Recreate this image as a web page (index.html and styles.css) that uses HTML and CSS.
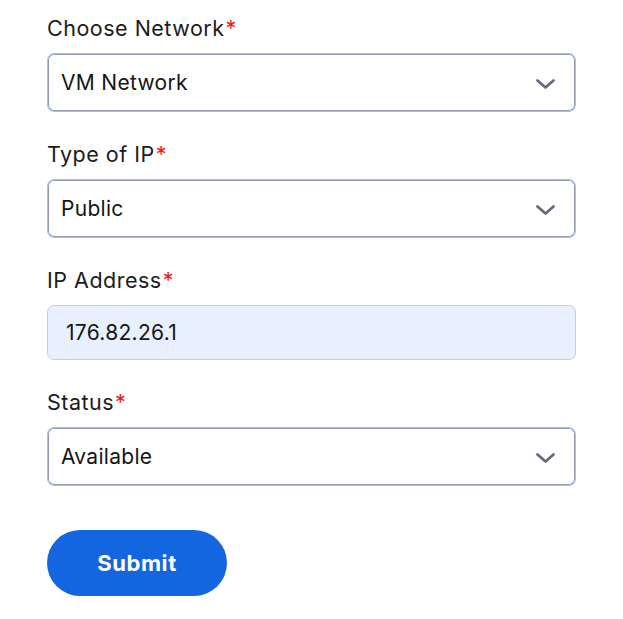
FILE: index.html
```html
<!DOCTYPE html>
<html lang="en">
<head>
<meta charset="utf-8">
<title>Network form</title>
<link rel="stylesheet" href="styles.css">
</head>
<body>
<form class="form">
  <div class="field">
    <label class="label">Choose Network<span class="req">*</span></label>
    <div class="select">
      <span class="value">VM Network</span>
      <svg class="chevron" width="21" height="12" viewBox="0 0 21 12"><polyline points="2.5,2.5 10.5,9.5 18.5,2.5" fill="none" stroke="#646b7a" stroke-width="2.8" stroke-linecap="round" stroke-linejoin="round"/></svg>
    </div>
  </div>
  <div class="field">
    <label class="label">Type of IP<span class="req">*</span></label>
    <div class="select">
      <span class="value">Public</span>
      <svg class="chevron" width="21" height="12" viewBox="0 0 21 12"><polyline points="2.5,2.5 10.5,9.5 18.5,2.5" fill="none" stroke="#646b7a" stroke-width="2.8" stroke-linecap="round" stroke-linejoin="round"/></svg>
    </div>
  </div>
  <div class="field">
    <label class="label">IP Address<span class="req">*</span></label>
    <div class="input"><span class="value">176.82.26.1</span></div>
  </div>
  <div class="field">
    <label class="label">Status<span class="req">*</span></label>
    <div class="select">
      <span class="value">Available</span>
      <svg class="chevron" width="21" height="12" viewBox="0 0 21 12"><polyline points="2.5,2.5 10.5,9.5 18.5,2.5" fill="none" stroke="#646b7a" stroke-width="2.8" stroke-linecap="round" stroke-linejoin="round"/></svg>
    </div>
  </div>
  <button type="button" class="submit">Submit</button>
</form>
</body>
</html>
```
FILE: styles.css
```css
html, body {
  margin: 0;
  padding: 0;
  background: #ffffff;
}
body {
  font-family: Inter, "Noto Sans", "Liberation Sans", sans-serif;
  color: #1b1b1b;
}
.form {
  display: flex;
  flex-direction: column;
  align-items: flex-start;
  width: 529px;
  padding: 15px 0 0 47px;
}
.field {
  display: flex;
  flex-direction: column;
  width: 100%;
  margin-bottom: 29px;
}
.label {
  display: block;
  font-size: 21.5px;
  line-height: 26px;
  letter-spacing: 0.5px;
  margin-bottom: 12px;
}
.req {
  color: #f21818;
  margin-left: 1px;
}
.select {
  box-sizing: border-box;
  height: 59px;
  width: 100%;
  display: flex;
  align-items: center;
  justify-content: space-between;
  padding: 0 19px 0 13px;
  border: 1px solid #a9c0f2;
  box-shadow: inset 0 0 0 1px #939aa8;
  border-radius: 7px;
  background: #ffffff;
}
.input {
  box-sizing: border-box;
  height: 55px;
  width: 100%;
  display: flex;
  align-items: center;
  padding: 0 18px;
  border: 1px solid #c9cdd4;
  border-radius: 7px;
  background: #e8f0fe;
}
.value {
  font-size: 21px;
  line-height: 26px;
  letter-spacing: 0.3px;
  color: #151515;
}
.chevron {
  display: block;
  margin-top: 2px;
}
.submit {
  margin-top: 15px;
  width: 180px;
  height: 66px;
  border: none;
  border-radius: 33px;
  background: #1366e0;
  color: #ffffff;
  font-family: Inter, "Noto Sans", sans-serif;
  font-weight: 700;
  font-size: 22px;
  letter-spacing: 0.6px;
  cursor: pointer;
}
```
